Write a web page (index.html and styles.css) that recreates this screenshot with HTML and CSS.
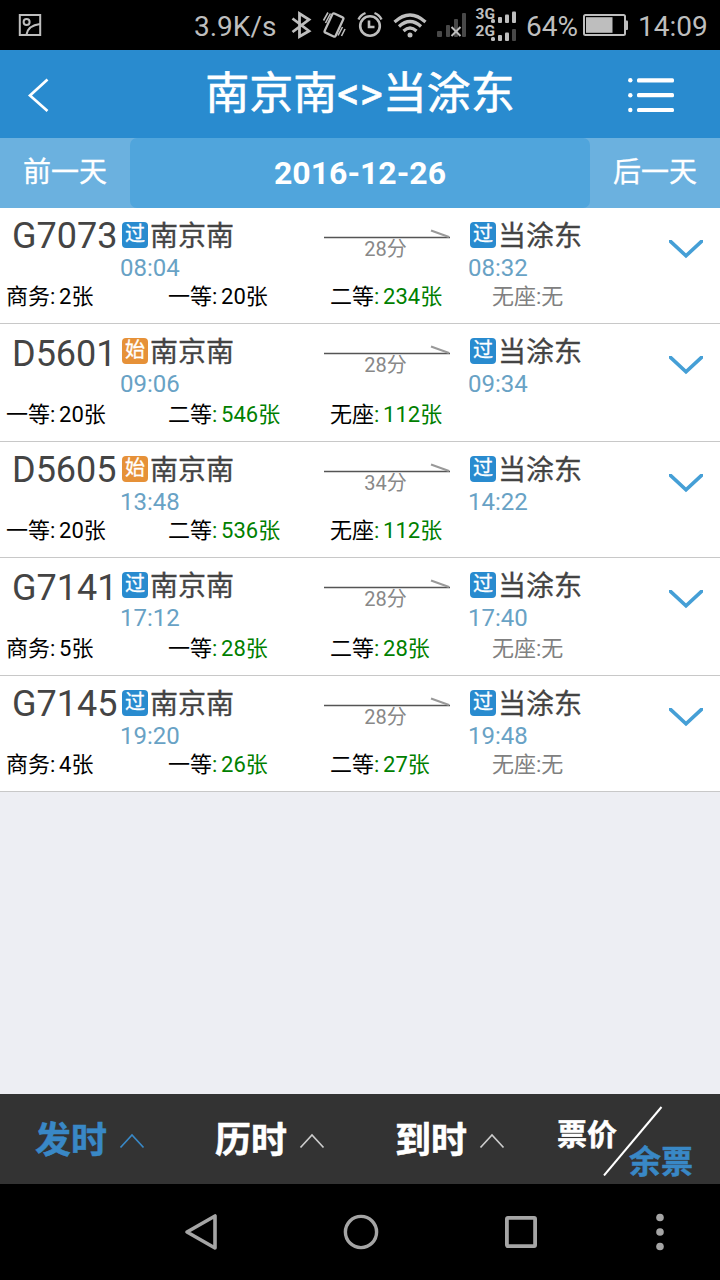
FILE: index.html
```html
<!DOCTYPE html>
<html lang="zh-CN">
<head>
<meta charset="utf-8">
<title>南京南 - 当涂东</title>
<link rel="stylesheet" href="styles.css">
</head>
<body>
<svg class="symbols" width="0" height="0">
  <symbol id="arrow" viewBox="0 0 126 12">
    <path d="M0 9.5H126" stroke="#555" stroke-width="1.4" fill="none"/>
    <path d="M107 2.5L125 9" stroke="#999" stroke-width="2" fill="none"/>
  </symbol>
  <symbol id="down" viewBox="0 0 34 20">
    <path d="M-0.500 -0.500L17 15.800L34.500 -0.500" stroke="#459fd6" stroke-width="3.600" fill="none"/>
  </symbol>
  <symbol id="up" viewBox="0 0 26 16">
    <path d="M1.5 14.5L13 2L24.5 14.5" stroke="currentColor" stroke-width="1.7" fill="none"/>
  </symbol>
</svg>
<div class="screen">
  <div class="status">
    <svg class="pic" width="24" height="24" viewBox="0 0 24 24" fill="none" stroke="#bebebe" stroke-width="2"><rect x="1.8" y="2" width="20.4" height="20" /><circle cx="8.6" cy="9" r="3"/><path d="M8.5 21.5C9.5 15.5 14 12 22 11"/></svg>
    <span class="speed">3.9K/s</span>
    <svg class="sys" width="248" height="50" viewBox="280 0 248 50" fill="none" stroke="#bebebe">
      <path d="M292.5 18.5L309 31L299.500 36.500V13.500L309 19.500L292.500 32" stroke-width="2.800"/>
      <g stroke-width="2.300"><rect x="-6" y="-10.500" width="12" height="21" rx="1.500" transform="translate(334 25) rotate(25)"/><path d="M323.500 20.500L328 12.500M325.500 23L330.500 13.500M338 35.500L342.500 27M341.500 36L345 29" stroke-width="1.600"/></g>
      <circle cx="370" cy="26" r="9.800" stroke-width="2.600"/><path d="M369 20.500V27H374.500" stroke-width="2.600"/><path d="M358.500 19.500Q360.500 15 365.500 13M381.500 19.500Q379.500 15 374.500 13" stroke-width="2.400"/>
      <g stroke-width="3.200"><path d="M394.500 22Q410 8 425.500 22M399 26.500Q410 16.500 421 26.500M403.500 31Q410 25 416.500 31"/><circle cx="410" cy="35" r="2.500" fill="#bebebe" stroke="none"/></g>
      <g fill="#484848" stroke="none"><rect x="437" y="31" width="5" height="6" rx="1"/><rect x="446" y="25" width="4" height="12" rx="1"/><rect x="454" y="19" width="4" height="18" rx="1"/><rect x="462" y="13" width="4" height="24" rx="1"/></g>
      <path d="M451.500 27L460.500 36M460.500 27L451.500 36" stroke-width="2"/>
      <g fill="#bebebe" stroke="none"><rect x="491" y="19" width="4" height="4" rx="1.500"/><rect x="498" y="17" width="4" height="6" rx="1"/><rect x="505" y="14.500" width="4" height="8.500" rx="1"/><rect x="512" y="11.500" width="4" height="11.500" rx="1"/><rect x="491" y="37" width="4" height="4" rx="1.500"/><rect x="498" y="35" width="4" height="6" rx="1"/><rect x="505" y="32.500" width="4" height="8.500" rx="1"/><rect x="512" y="29" width="4" height="12" rx="1" fill="#484848"/>
      <text x="475.500" y="19.300" class="net">3G</text><text x="475.500" y="35.500" class="net">2G</text></g>
    </svg>
    <span class="percent">64%</span>
    <svg class="battery" width="46" height="24" viewBox="0 0 46 24"><rect x="1" y="2" width="41" height="20" rx="1.500" fill="none" stroke="#bebebe" stroke-width="2"/><rect x="3" y="4.200" width="26.500" height="15.600" fill="#bebebe"/><rect x="42" y="7.500" width="3" height="9.500" rx="1" fill="#bebebe"/></svg>
    <span class="clock">14:09</span>
  </div>

  <header class="header">
    <svg class="back" width="24" height="36" viewBox="0 0 24 36"><path d="M20.500 2.500L3 18.500L20.500 34" fill="none" stroke="#fff" stroke-width="2.700"/></svg>
    <h1 class="title">南京南&lt;&gt;当涂东</h1>
    <svg class="menu" width="46" height="36" viewBox="0 0 46 36" fill="#fff"><circle cx="2.300" cy="3.300" r="2.200"/><circle cx="2.300" cy="18.200" r="2.200"/><circle cx="2.300" cy="33" r="2.200"/><rect x="9" y="1.200" width="37" height="4.200" rx="1.500"/><rect x="9" y="16.100" width="37" height="4.200" rx="1.500"/><rect x="9" y="30.900" width="37" height="4.200" rx="1.500"/></svg>
  </header>

  <nav class="days">
    <span class="day">前一天</span>
    <span class="date">2016-12-26</span>
    <span class="day">后一天</span>
  </nav>

  <main class="list">
    <article class="train">
      <div class="trip">
        <div class="code">G7073</div>
        <div class="stop"><div class="station"><i class="tag">过</i>南京南</div><div class="time">08:04</div></div>
        <div class="leg"><svg width="126" height="12"><use href="#arrow"/></svg><span>28分</span></div>
        <div class="stop"><div class="station"><i class="tag">过</i>当涂东</div><div class="time">08:32</div></div>
        <svg class="more" width="34" height="20"><use href="#down"/></svg>
      </div>
      <div class="seats"><span>商务: 2张</span><span>一等: 20张</span><span>二等<b>: 234张</b></span><span class="none">无座:无</span></div>
    </article>
    <article class="train tall">
      <div class="trip">
        <div class="code">D5601</div>
        <div class="stop"><div class="station"><i class="tag start">始</i>南京南</div><div class="time">09:06</div></div>
        <div class="leg"><svg width="126" height="12"><use href="#arrow"/></svg><span>28分</span></div>
        <div class="stop"><div class="station"><i class="tag">过</i>当涂东</div><div class="time">09:34</div></div>
        <svg class="more" width="34" height="20"><use href="#down"/></svg>
      </div>
      <div class="seats"><span>一等: 20张</span><span>二等<b>: 546张</b></span><span>无座<b>: 112张</b></span></div>
    </article>
    <article class="train">
      <div class="trip">
        <div class="code">D5605</div>
        <div class="stop"><div class="station"><i class="tag start">始</i>南京南</div><div class="time">13:48</div></div>
        <div class="leg"><svg width="126" height="12"><use href="#arrow"/></svg><span>34分</span></div>
        <div class="stop"><div class="station"><i class="tag">过</i>当涂东</div><div class="time">14:22</div></div>
        <svg class="more" width="34" height="20"><use href="#down"/></svg>
      </div>
      <div class="seats"><span>一等: 20张</span><span>二等<b>: 536张</b></span><span>无座<b>: 112张</b></span></div>
    </article>
    <article class="train tall">
      <div class="trip">
        <div class="code">G7141</div>
        <div class="stop"><div class="station"><i class="tag">过</i>南京南</div><div class="time">17:12</div></div>
        <div class="leg"><svg width="126" height="12"><use href="#arrow"/></svg><span>28分</span></div>
        <div class="stop"><div class="station"><i class="tag">过</i>当涂东</div><div class="time">17:40</div></div>
        <svg class="more" width="34" height="20"><use href="#down"/></svg>
      </div>
      <div class="seats"><span>商务: 5张</span><span>一等<b>: 28张</b></span><span>二等<b>: 28张</b></span><span class="none">无座:无</span></div>
    </article>
    <article class="train">
      <div class="trip">
        <div class="code">G7145</div>
        <div class="stop"><div class="station"><i class="tag">过</i>南京南</div><div class="time">19:20</div></div>
        <div class="leg"><svg width="126" height="12"><use href="#arrow"/></svg><span>28分</span></div>
        <div class="stop"><div class="station"><i class="tag">过</i>当涂东</div><div class="time">19:48</div></div>
        <svg class="more" width="34" height="20"><use href="#down"/></svg>
      </div>
      <div class="seats"><span>商务: 4张</span><span>一等<b>: 26张</b></span><span>二等<b>: 27张</b></span><span class="none">无座:无</span></div>
    </article>
  </main>

  <footer class="sort">
    <div class="key active">发时<svg width="26" height="16"><use href="#up"/></svg></div>
    <div class="key">历时<svg width="26" height="16"><use href="#up"/></svg></div>
    <div class="key">到时<svg width="26" height="16"><use href="#up"/></svg></div>
    <div class="switch">
      <span class="price">票价</span>
      <svg class="slash" width="60" height="70" viewBox="0 0 60 70"><path d="M58.500 1L1 69.500" stroke="#fff" stroke-width="2"/></svg>
      <span class="remain">余票</span>
    </div>
  </footer>

  <div class="android">
    <svg width="34" height="38" viewBox="0 0 34 38"><path d="M31 3V35L3 19Z" fill="none" stroke="#a5a5a5" stroke-width="3.600" stroke-linejoin="round"/></svg>
    <svg width="36" height="36" viewBox="0 0 36 36"><circle cx="18" cy="18" r="15.600" fill="none" stroke="#a5a5a5" stroke-width="3.400"/></svg>
    <svg width="34" height="34" viewBox="0 0 34 34"><rect x="2.900" y="2.900" width="28.200" height="28.200" rx="1" fill="none" stroke="#a5a5a5" stroke-width="3.800"/></svg>
    <svg width="8" height="38" viewBox="0 0 8 38" fill="#a5a5a5"><circle cx="4" cy="4.500" r="3.800"/><circle cx="4" cy="19" r="3.800"/><circle cx="4" cy="33.500" r="3.800"/></svg>
  </div>
</div>
</body>
</html>
```
FILE: styles.css
```css
* { box-sizing: border-box; }
body {
  margin: 0;
  font-family: Roboto, "Noto Sans CJK SC", sans-serif;
  background: #edeef3;
}
.symbols { position: absolute; }
.screen {
  display: flex;
  flex-direction: column;
  width: 720px;
  height: 1280px;
  overflow: hidden;
}
svg { display: block; flex: none; }

.status {
  display: flex;
  align-items: center;
  flex: none;
  height: 50px;
  padding-left: 18px;
  background: #000;
  color: #bebebe;
  font-size: 28px;
  line-height: 46px;
  white-space: nowrap;
}
.status span { padding-top: 4px; }
.speed { width: 128px; margin-left: 152px; flex: none; }
.sys { margin-left: -42px; }
.percent { width: 56px; margin-left: -2px; flex: none; }
.battery { margin-left: 1px; }
.clock { margin-left: 9px; }
.net { font-size: 15.5px; font-weight: 700; }

.header {
  display: flex;
  align-items: center;
  flex: none;
  height: 88px;
  padding: 0 46px 0 27px;
  background: #298bcf;
}
.back, .menu { margin-top: 2px; }
.title {
  flex: 1;
  margin: 0;
  padding-left: 41px;
  color: #fff;
  font-size: 44px;
  font-weight: 400;
  line-height: 86px;
  text-align: center;
  white-space: nowrap;
  -webkit-text-stroke: 0.6px #fff;
}

.days {
  display: grid;
  grid-template-columns: 130px 1fr 130px;
  flex: none;
  height: 70px;
  background: #6bb1df;
  color: #fff;
  text-align: center;
}
.day { font-size: 28px; line-height: 69px; -webkit-text-stroke: 0.3px #fff; }
.date {
  border-radius: 7px;
  background: #50a5dc;
  font-size: 32px;
  font-weight: 700;
  line-height: 70px;
}

.list { flex: 1; }
.train {
  height: 116px;
  padding-top: 12px;
  border-bottom: 1px solid #c8c8c8;
  background: #fff;
}
.tall { height: 118px; }
.trip {
  display: grid;
  grid-template-columns: 108px 204px 144px 202px 34px;
  height: 65px;
  padding-left: 12px;
}
.tall .trip { height: 67px; }
.code { color: #444; font-size: 36px; line-height: 33px; }
.tall .code { line-height: 37px; }
.station {
  display: flex;
  height: 31px;
  padding-left: 2px;
  color: #444;
  font-size: 28px;
  line-height: 33px;
  -webkit-text-stroke: 0.3px #444;
}
.tag {
  width: 26px;
  height: 26px;
  margin: 2px 2px 0 0;
  border-radius: 4px;
  background: #298bcf;
  color: #fff;
  font-size: 20px;
  font-style: normal;
  line-height: 25px;
  text-align: center;
  -webkit-text-stroke: 0.3px #fff;
}
.start { background: #e69138; }
.time { color: #68a2c5; font-size: 24px; line-height: 34px; }
.leg { width: 126px; padding-top: 8px; }
.leg span {
  display: block;
  padding-right: 3px;
  color: #888;
  font-size: 20px;
  line-height: 18px;
  text-align: center;
}
.more { margin-top: 20px; margin-left: -1px; }
.seats {
  display: grid;
  grid-template-columns: repeat(4, 162px);
  padding-left: 6px;
  color: #000;
  font-size: 22px;
  line-height: 24px;
  word-spacing: -1.7px;
}
.seats b { color: #008000; font-weight: 400; }
.seats .none { color: #808080; }

.sort {
  display: grid;
  grid-template-columns: repeat(4, 180px);
  flex: none;
  height: 90px;
  background: #333;
  color: #fff;
  font-weight: 700;
  -webkit-text-stroke: 0.5px currentColor;
}
.key {
  display: flex;
  gap: 12px;
  padding-left: 35px;
  font-size: 36px;
  line-height: 95px;
}
.key svg { margin-top: 39px; color: #ccc; }
.key.active, .key.active svg { color: #3988c6; }
.switch { display: flex; align-items: flex-start; padding-left: 17px; }
.price { font-size: 30px; line-height: 32px; margin-top: 25px; }
.slash { margin: 12px 0 0 -14px; }
.remain { font-size: 32px; line-height: 32px; margin: 52px 0 0 -34px; color: #3988c6; }

.android {
  display: flex;
  align-items: center;
  flex: none;
  gap: 125px;
  height: 96px;
  padding-left: 184px;
  background: #000;
}
.android svg:last-child { margin-left: -7px; }
```
